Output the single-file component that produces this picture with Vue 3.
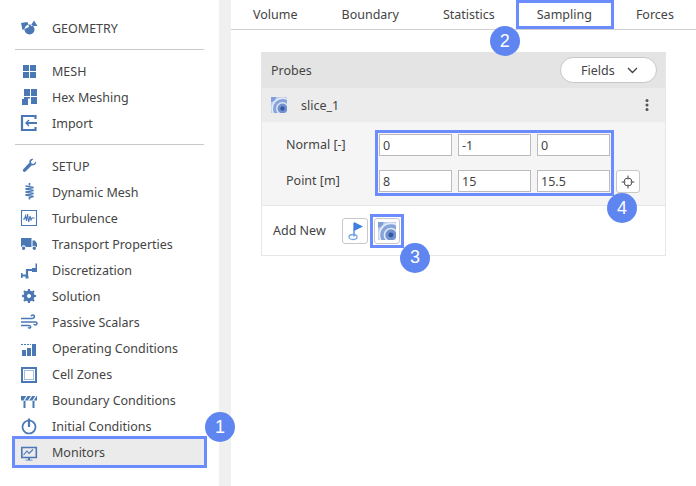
<script setup>
const groups = [
  [{ label: 'GEOMETRY', icon: 'geometry' }],
  [
    { label: 'MESH', icon: 'mesh' },
    { label: 'Hex Meshing', icon: 'hex' },
    { label: 'Import', icon: 'import' },
  ],
  [
    { label: 'SETUP', icon: 'setup' },
    { label: 'Dynamic Mesh', icon: 'dynamic' },
    { label: 'Turbulence', icon: 'turbulence' },
    { label: 'Transport Properties', icon: 'transport' },
    { label: 'Discretization', icon: 'discretization' },
    { label: 'Solution', icon: 'solution' },
    { label: 'Passive Scalars', icon: 'passive' },
    { label: 'Operating Conditions', icon: 'operating' },
    { label: 'Cell Zones', icon: 'cells' },
    { label: 'Boundary Conditions', icon: 'boundary' },
    { label: 'Initial Conditions', icon: 'initial' },
    { label: 'Monitors', icon: 'monitors', active: true },
  ],
];

// fill = solid shapes, line = 1.5px strokes, thick = 2.5px strokes
const icons = {
  geometry: {
    fill: 'M1 4 7.500 3l1.500 5-6.500 3z M14 1.500l3.500 5.500h-7z M9.500 5.500a5 5 0 1 0 .01 0z',
  },
  mesh: {
    fill: 'M3 3h6v6H3z M10 3h6v6h-6z M3 10h6v6H3z M10 10h6v6h-6z',
  },
  hex: {
    fill: 'M4 1h6v7H4z M11 1h6v7h-6z M11 9h6v7h-6z M4 9h6v1.500H8v1H4z M2 11h6v6H2z',
  },
  import: {
    thick: 'M15.500 5V2H2v14h13.500v-3',
    fill: 'M8.500 5.500 9.500 6.500 8 8h9v2H8l1.500 1.500-1 1L5 9z',
  },
  setup: {
    fill: 'M16 4.500 13.500 7l-2-.6-.6-2L13.400 2c-2.400-.7-4.600 1.300-4 3.800L3.500 12c-.8.800-.8 1.800-.2 2.500.7.700 1.800.6 2.500-.2l6-6c2.600.7 5-1.500 4.200-3.800z',
  },
  dynamic: {
    line: 'M9.500 0v2.500 M5.500 3l8 1.500-8 1.500 8 1.500-8 1.500 8 1.500-8 1.500 8 1.500-4 1v2',
  },
  turbulence: {
    thin: 'M1.500 1.500h15v15h-15z M3 10h1.500l1-3 1 5 1-7 1.200 8 1.300-6 1 4 1-2h2.500',
  },
  transport: {
    fill: 'M1 3.500C1 3 1.500 3 2 3h9.500v9H5.800a2.300 2.300 0 0 0-4.400 0H1z M12.500 5.500h2.500l2 3v3.500h-.8a2.300 2.300 0 0 0-3.700-.5z M3.600 11.500a1.700 1.700 0 1 0 .01 0z M14.300 11.500a1.700 1.700 0 1 0 .01 0z',
  },
  discretization: {
    thick: 'M1.500 14.500h5.500V9h6.500',
    fill: 'M1 12h1.500v5H1z M5.500 15h3v2.500h-3z M12 7h3.500V2.500H17V11h-5z',
  },
  solution: {
    fill: 'M9 3.500a5.500 5.500 0 1 0 .01 0z M9 7a2 2 0 1 1-.01 0z',
    fillRule: 'evenodd',
    thick: 'M9 2V4 M9 14V16 M2 9H4 M14 9H16 M4 4 5.500 5.500 M12.500 12.500 14 14 M4 14 5.500 12.500 M12.500 5.500 14 4',
  },
  passive: {
    line: 'M1 5.500h11c3 0 3-3.500.8-3.500-1 0-1.500.5-1.800 1.200 M1 9h14.500c2 0 2 3-.3 3-.8 0-1.200-.4-1.500-1 M1 12.500h8c2 0 2.200 2.500 .4 2.500-.7 0-1.100-.3-1.300-.7',
  },
  operating: {
    fill: 'M2 11h4v6H2z M7 9h4v8H7z M12 5h4v12h-4z',
    thin: 'M1 5.500h10',
    dash: true,
  },
  cells: {
    fill: 'M1 2h16v16H1z M3 4v12h12V4z',
    fillRule: 'evenodd',
    dots: 'M4.500 5.500h9v9h-9z',
  },
  boundary: {
    fill: 'M1 5h16v4.500H1z M3.500 10h2v7h-2z M12.500 10h2v7h-2z',
    white: 'M4 9.500 7 5 M8.500 9.500 11.500 5 M13 9.500 16 5',
  },
  initial: {
    line: 'M9 3.500a6.500 6.500 0 1 0 .01 0z',
    thick: 'M9 1.500V10',
  },
  monitors: {
    line: 'M1.800 4.500h14.500v10H1.800z',
    thin: 'M3.500 12l3.500-4 2 2.500L13 6.500',
    fill: 'M8 14.500h2v2.300h2.500v.7h-7v-.7H8z',
  },
};

const tabs = ['Volume', 'Boundary', 'Statistics', 'Sampling', 'Forces'];
const fieldRows = [
  { label: 'Normal [-]', values: ['0', '-1', '0'] },
  { label: 'Point [m]', values: ['8', '15', '15.5'] },
];
</script>

<template>
  <div class="page">
    <aside class="sidebar">
      <template v-for="(group, g) in groups" :key="g">
        <div v-if="g > 0" class="divider"></div>
        <div
          v-for="item in group"
          :key="item.label"
          class="nav-item"
          :class="{ active: item.active }"
        >
          <svg class="nav-icon" width="18" height="18" viewBox="0 0 18 18">
            <path
              v-if="icons[item.icon].fill"
              :d="icons[item.icon].fill"
              :fill-rule="icons[item.icon].fillRule || 'nonzero'"
              fill="#4a78b5"
            />
            <path
              v-if="icons[item.icon].line"
              :d="icons[item.icon].line"
              fill="none"
              stroke="#4a78b5"
              stroke-width="1.600"
            />
            <path
              v-if="icons[item.icon].thick"
              :d="icons[item.icon].thick"
              fill="none"
              stroke="#4a78b5"
              stroke-width="2.200"
            />
            <path
              v-if="icons[item.icon].thin"
              :d="icons[item.icon].thin"
              fill="none"
              stroke="#4a78b5"
              stroke-width="1.100"
              :stroke-dasharray="icons[item.icon].dash ? '2 1' : null"
            />
            <path
              v-if="icons[item.icon].dots"
              :d="icons[item.icon].dots"
              fill="none"
              stroke="#4a78b5"
              stroke-dasharray="1 1"
            />
            <path
              v-if="icons[item.icon].white"
              :d="icons[item.icon].white"
              fill="none"
              stroke="#fff"
              stroke-width="1.200"
            />
          </svg>
          <span>{{ item.label }}</span>
          <span v-if="item.active" class="badge badge-monitors">1</span>
        </div>
      </template>
    </aside>

    <div class="gutter"></div>

    <main class="content">
      <nav class="tabs">
        <div
          v-for="tab in tabs"
          :key="tab"
          class="tab"
          :class="{ selected: tab === 'Sampling' }"
        >
          {{ tab }}
          <span v-if="tab === 'Sampling'" class="badge badge-tab">2</span>
        </div>
      </nav>

      <section class="card">
        <header class="card-head">
          <span>Probes</span>
          <div class="fields-btn">
            <span>Fields</span>
            <svg width="11" height="7" viewBox="0 0 11 7">
              <path d="M1 1l4.500 4.500L10 1" fill="none" stroke="#444" stroke-width="1.400" />
            </svg>
          </div>
        </header>

        <div class="slice-row">
          <svg class="slice-icon" width="16" height="16" viewBox="0 0 16 16">
            <symbol id="slice" viewBox="0 0 16 16">
              <rect width="16" height="16" fill="#bccdea" />
              <path d="M0 0h5a5 5 0 0 1-5 5z" fill="#7f9fd8" />
              <clipPath id="slice-clip"><rect width="16" height="16" /></clipPath>
              <g clip-path="url(#slice-clip)">
                <circle cx="11.500" cy="11.500" r="11" fill="#e3eaf7" />
                <circle cx="11.500" cy="11.500" r="9.500" fill="#86a4da" />
                <circle cx="11.500" cy="11.500" r="6.500" fill="#dfe7f5" />
                <circle cx="11.500" cy="11.500" r="5" fill="#7391cf" />
              </g>
              <circle cx="11.500" cy="11.500" r="2.200" fill="#33589f" />
            </symbol>
            <use href="#slice" />
          </svg>
          <span class="slice-name">slice_1</span>
          <svg class="kebab" width="4" height="14" viewBox="0 0 4 14">
            <circle cx="2" cy="2.500" r="1.500" fill="#555" />
            <circle cx="2" cy="7" r="1.500" fill="#555" />
            <circle cx="2" cy="11.500" r="1.500" fill="#555" />
          </svg>
        </div>

        <div class="card-body">
          <div class="labels">
            <span v-for="row in fieldRows" :key="row.label">{{ row.label }}</span>
          </div>
          <div class="input-grid">
            <template v-for="row in fieldRows" :key="row.label">
              <input v-for="(v, i) in row.values" :key="i" class="num" :value="v" />
            </template>
            <span class="badge badge-inputs">4</span>
          </div>
          <div class="pick-btn">
            <svg width="14" height="14" viewBox="0 0 14 14">
              <circle cx="7" cy="7" r="4" fill="none" stroke="#555" />
              <path d="M7 0.500v4 M7 9.500v4 M0.500 7h4 M9.500 7h4" stroke="#555" />
            </svg>
          </div>
        </div>

        <footer class="card-foot">
          <span class="add-label">Add New</span>
          <div class="icon-btn">
            <svg width="18" height="20" viewBox="0 0 18 20">
              <path d="M8 2v13.500" stroke="#5c8ee0" stroke-width="1.500" />
              <path d="M8 1l9 4.500-9 4.500z" fill="#3f7fe0" />
              <ellipse cx="7" cy="16" rx="4" ry="2.500" fill="none" stroke="#7aa5e8" stroke-width="1.300" />
            </svg>
          </div>
          <div class="selected-wrap">
            <div class="icon-btn">
              <svg width="18" height="18" viewBox="0 0 16 16"><use href="#slice" /></svg>
            </div>
            <span class="badge badge-add">3</span>
          </div>
        </footer>
      </section>
    </main>
  </div>
</template>

<style>
html,
body {
  margin: 0;
  background: #fff;
}
</style>

<style scoped>
.page {
  display: flex;
  width: 696px;
  height: 486px;
  overflow: hidden;
  font-family: 'Noto Sans', 'Open Sans', sans-serif;
  font-size: 12.5px;
  color: #444;
  background: #fff;
}

.sidebar {
  flex: none;
  width: 219px;
  box-sizing: border-box;
  padding-top: 15px;
}

.divider {
  height: 1px;
  margin: 8px 15px 8px 15px;
  background: #c9c9c9;
}

.nav-item {
  position: relative;
  display: flex;
  align-items: center;
  height: 26px;
  margin: 0 15px;
  padding-left: 5px;
}

.nav-icon {
  flex: none;
  margin-right: 14px;
}

.nav-item.active {
  background: #ebebeb;
  outline: 3px solid #6b8cff;
}

.gutter {
  flex: none;
  width: 12px;
  background: #f0f0f0;
}

.content {
  flex: 1;
  min-width: 0;
}

.tabs {
  display: flex;
  height: 29px;
  border-bottom: 1px solid #d0d0d0;
}

.tab {
  position: relative;
  display: flex;
  align-items: center;
  padding: 0 22px;
  white-space: nowrap;
}

.tab.selected {
  margin-left: -1px;
  padding-left: 21px;
  outline: 3px solid #6b8cff;
  outline-offset: -3px;
}

.card {
  width: 405px;
  margin: 22px 0 0 30px;
  border: 1px solid #e6e6e6;
  border-top: 0;
  box-sizing: border-box;
}

.card-head {
  display: flex;
  align-items: center;
  justify-content: space-between;
  height: 36px;
  padding: 0 8px 0 9px;
  background: #e4e4e4;
}

.fields-btn {
  display: flex;
  align-items: center;
  justify-content: space-between;
  box-sizing: border-box;
  width: 97px;
  height: 26px;
  padding: 0 18px 0 20px;
  background: #fff;
  border: 1px solid #c8c8c8;
  border-radius: 13px;
}

.slice-row {
  display: flex;
  align-items: center;
  height: 34px;
  padding: 0 16px 0 9px;
  background: #ececec;
}

.slice-name {
  flex: 1;
  margin-left: 14px;
}

.card-body {
  display: flex;
  align-items: flex-end;
  padding: 12px 0 13px 24px;
  background: #f5f5f5;
  border-bottom: 1px solid #e6e6e6;
}

.labels {
  display: flex;
  flex-direction: column;
  gap: 14px;
  width: 93px;
}

.labels span {
  line-height: 22px;
}

.input-grid {
  position: relative;
  display: grid;
  grid-template-columns: repeat(3, 73px);
  grid-auto-rows: 22px;
  gap: 14px 6px;
  outline: 3px solid #6b8cff;
  outline-offset: 1px;
}

.num {
  box-sizing: border-box;
  width: 73px;
  height: 22px;
  padding: 0 3px;
  border: 1px solid #bbb;
  background: #fff;
  font: inherit;
  color: #444;
}

.pick-btn {
  display: flex;
  align-items: center;
  justify-content: center;
  box-sizing: border-box;
  width: 24px;
  height: 23px;
  margin-left: 6px;
  margin-bottom: -1px;
  background: #fff;
  border: 1px solid #c8c8c8;
  border-radius: 3px;
}

.card-foot {
  display: flex;
  align-items: center;
  height: 49px;
  padding-left: 11px;
}

.add-label {
  width: 69px;
}

.icon-btn {
  display: flex;
  align-items: center;
  justify-content: center;
  box-sizing: border-box;
  width: 26px;
  height: 26px;
  background: #fff;
  border: 1px solid #c8c8c8;
  border-radius: 3px;
}

.selected-wrap {
  position: relative;
  margin-left: 6px;
  outline: 3px solid #6b8cff;
  outline-offset: 1px;
}

.badge {
  position: absolute;
  display: flex;
  align-items: center;
  justify-content: center;
  width: 30px;
  height: 30px;
  border-radius: 50%;
  background: #5f85f0;
  color: #fff;
  font-family: 'Liberation Sans', Arial, sans-serif;
  font-size: 18px;
}

.badge-monitors {
  left: 190px;
  top: -27px;
}

.badge-tab {
  left: -26px;
  top: 26px;
}

.badge-inputs {
  left: 228px;
  top: 59px;
}

.badge-add {
  left: 26px;
  top: 25px;
}
</style>
